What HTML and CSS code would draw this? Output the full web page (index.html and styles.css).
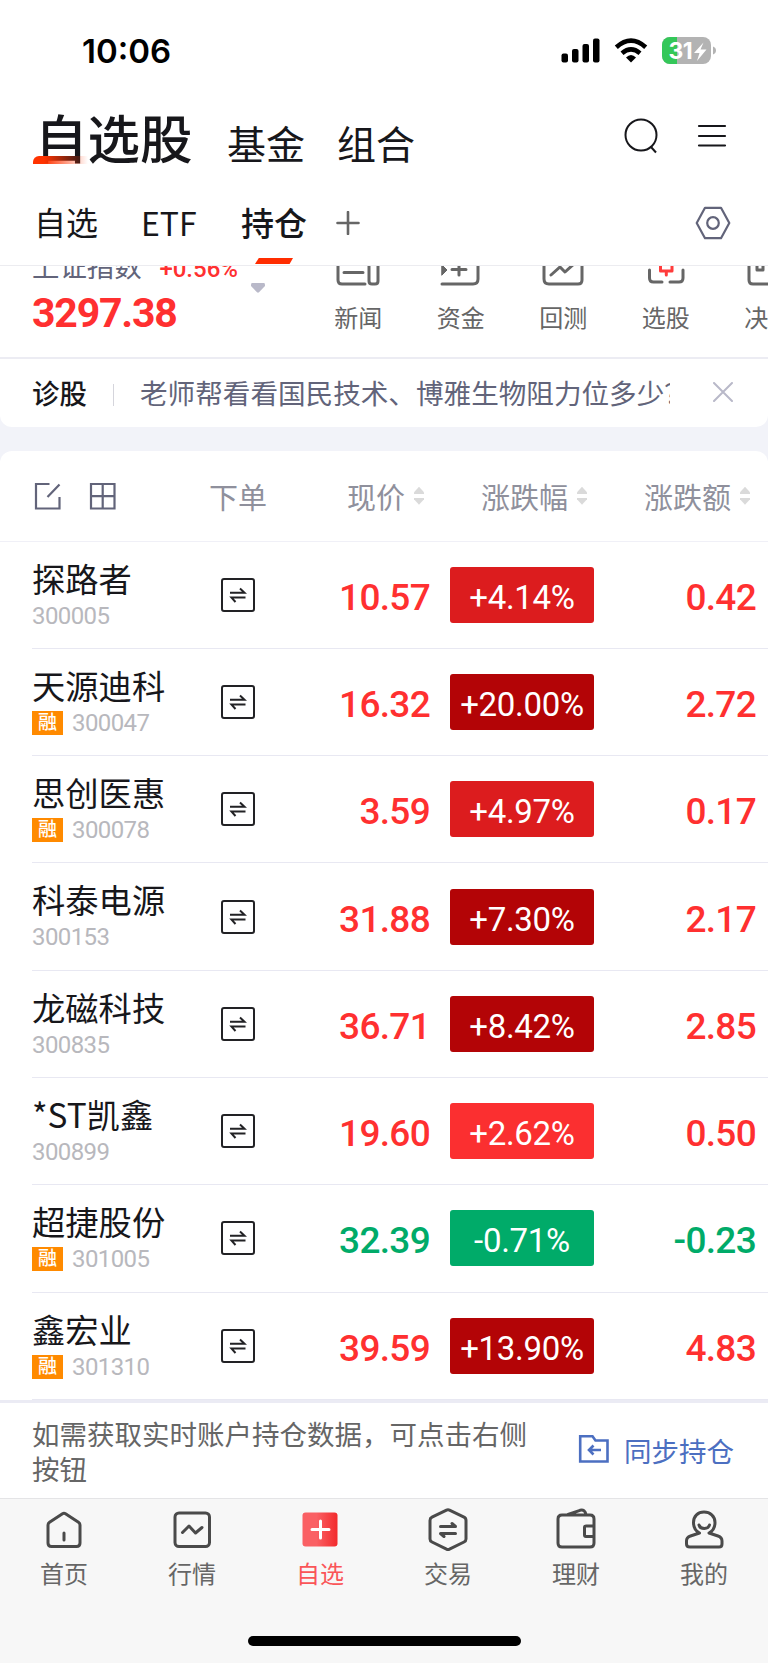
FILE: index.html
```html
<!DOCTYPE html>
<html lang="zh-CN">
<head>
  <meta charset="UTF-8" />
  <meta name="viewport" content="width=device-width, initial-scale=1.0" />
  <title>自选股</title>
  <link rel="stylesheet" href="styles.css">
</head>
<body>
  <div class="status">
    <span class="time">10:06</span>
    <svg class="status-icons" width="160" height="30" viewBox="0 0 160 30">
      <g fill="#000">
        <rect x="1.500" y="17.500" width="6.500" height="9" rx="2" />
        <rect x="12" y="13" width="6.500" height="13.500" rx="2" />
        <rect x="22.500" y="8" width="6.500" height="18.500" rx="2" />
        <rect x="33" y="2.500" width="6.500" height="24" rx="2" />
      </g>
      <g fill="none" stroke="#000" stroke-width="4.600">
        <path d="M56.300 11.300Q71 -1.900 85.700 11.300" />
        <path d="M62 17.200Q71 9.700 80 17.200" />
      </g>
      <path d="M66 21.500Q71 16.500 76 21.500L71 26.500Z" />
      <rect x="102" y="1" width="49" height="27" rx="8" fill="#b3b3b3" />
      <path d="M117 1H110a8 8 0 0 0-8 8V20a8 8 0 0 0 8 8H117Z" fill="#34c759" />
      <path d="M153 10.500q3 1.200 3 4t-3 4Z" fill="#b3b3b3" />
      <text x="108.500" y="22.800" class="battery-text">31</text>
      <path d="M143.500 6.500L134 17H139.500L137 25L146.500 13.500H140.500Z" fill="#fff" />
    </svg>
  </div>

  <header class="titles">
    <h1 class="title-active">自选股</h1>
    <span class="title">基金</span>
    <span class="title">组合</span>
    <svg class="search" width="36" height="38" viewBox="0 0 36 38" fill="none" stroke="#17171b" stroke-width="2">
      <circle cx="18" cy="18" r="15.500" />
      <path d="M28 30L33 35.500" />
    </svg>
    <svg class="menu" width="30" height="26" viewBox="0 0 30 26" stroke="#17171b" stroke-width="2.200" stroke-linecap="round">
      <path d="M2 3H28M2 13H28M2 22.500H28" />
    </svg>
  </header>

  <nav class="groups">
    <span class="group group-own">自选</span>
    <span class="group group-etf">ETF</span>
    <span class="group group-active">持仓</span>
    <svg class="add" width="24" height="24" viewBox="0 0 24 24" stroke="#666" stroke-width="2.600" stroke-linecap="round">
      <path d="M1.500 12H22.500M12 1V23" />
    </svg>
    <svg class="setting" width="36" height="34" viewBox="0 0 36 34" fill="none" stroke="#62647a" stroke-width="2.200" stroke-linejoin="round">
      <path d="M10 1.800H26L34.300 17L26 32.200H10L1.700 17Z" />
      <circle cx="18" cy="17" r="5.800" />
    </svg>
  </nav>

  <section class="strip">
    <div class="index">
      <div class="index-top"><span>上证指数</span><b class="index-change">+0.56%</b></div>
      <div class="index-value">3297.38</div>
    </div>
    <svg class="arrow" width="14" height="10" viewBox="0 0 14 10" fill="#b9b9c9">
      <path d="M1 0H13Q14 0 14 2V3L8 9.300Q7 10 6 9.300L0 3V2Q0 0 1 0Z" />
    </svg>
    <div class="shortcuts">
      <div class="shortcut">
        <svg width="44" height="40" viewBox="0 0 44 40">
          <path d="M29 2H5Q2 2 2 5V33Q2 37 6 37H29M8 16H27M8 25.500H27M33 15H39Q42 15 42 18V34Q42 37 39 37H36Q33 37 33 34Z" />
        </svg>
        <span>新闻</span>
      </div>
      <div class="shortcut">
        <svg width="44" height="40" viewBox="0 0 44 40">
          <path d="M3 37H34Q39 37 39 32V6Q39 2 35 2H3M13 22.500H27M20 14V28" />
          <path d="M3 18L8 23L3 28Z" class="solid" />
        </svg>
        <span>资金</span>
      </div>
      <div class="shortcut">
        <svg width="44" height="40" viewBox="0 0 44 40">
          <path d="M3 2H41V33Q41 37 37 37H8Q3 37 3 32ZM10 28L19 20L24 25L34 16" />
        </svg>
        <span>回测</span>
      </div>
      <div class="shortcut">
        <svg width="44" height="40" viewBox="0 0 44 40">
          <path d="M5.500 23V31Q5.500 35 9.500 35H18M39 23V31Q39 35 35 35H26" />
          <path d="M16.500 8H28V24H16.500ZM22.300 24V28" class="red" />
        </svg>
        <span>选股</span>
      </div>
      <div class="shortcut">
        <svg width="44" height="40" viewBox="0 0 44 40">
          <path d="M3 2H41V37H7Q3 37 3 33ZM11 8V23H17V8" />
        </svg>
        <span>决策</span>
      </div>
    </div>
  </section>

  <section class="advice">
    <b class="advice-tag">诊股</b>
    <span class="advice-line"></span>
    <span class="advice-text">老师帮看看国民技术、博雅生物阻力位多少？</span>
    <svg class="close" width="20" height="20" viewBox="0 0 20 20" stroke="#b9b9c9" stroke-width="2" stroke-linecap="round">
      <path d="M1 1L19 19M19 1L1 19" />
    </svg>
  </section>

  <main class="stocks">
    <div class="head">
      <div class="tools">
        <svg width="27" height="28" viewBox="0 0 27 28" fill="none" stroke="#62647a" stroke-width="2.200">
          <path d="M15.500 2H2V26.500H25.500V15M13.500 15L25.500 2.500" />
        </svg>
        <svg width="27" height="28" viewBox="0 0 27 28" fill="none" stroke="#62647a" stroke-width="2.200">
          <path d="M2 2H25.500V26.500H2ZM2 14.200H25.500M13.700 2V26.500" />
        </svg>
      </div>
      <span class="head-order">下单</span>
      <span class="head-sort">现价<i class="sort"></i></span>
      <span class="head-sort">涨跌幅<i class="sort"></i></span>
      <span class="head-sort">涨跌额<i class="sort"></i></span>
    </div>
    <div id="rows"></div>
  </main>

  <section class="sync">
    <p class="sync-text">如需获取实时账户持仓数据，可点击右侧按钮</p>
    <svg width="32" height="30" viewBox="0 0 32 30" fill="none" stroke="#4c6fc1" stroke-width="2.600">
      <path d="M2.200 2.200H14.500L17.500 6.500H29.500V27.500H2.200Z" />
      <path d="M23 16H11M15.500 11.500L11 16L15.500 20.500" />
    </svg>
    <span class="sync-link">同步持仓</span>
  </section>

  <footer class="tabbar">
    <div class="tab">
      <svg width="44" height="44" viewBox="0 0 44 44">
        <path d="M6 17Q6 15.300 7.500 14.300L20.500 5.700Q22 4.700 23.500 5.700L36.500 14.300Q38 15.300 38 17V35Q38 38.500 34.500 38.500H9.500Q6 38.500 6 35ZM22 25V32" />
      </svg>
      <span>首页</span>
    </div>
    <div class="tab">
      <svg width="44" height="44" viewBox="0 0 44 44">
        <rect x="5" y="5" width="34.500" height="33.500" rx="4" />
        <path d="M12.500 24.500L19 18L25.500 25L32 19.500" />
      </svg>
      <span>行情</span>
    </div>
    <div class="tab tab-active">
      <svg width="44" height="44" viewBox="0 0 44 44">
        <defs>
          <linearGradient id="own">
            <stop offset="0.400" stop-color="#fa6064" />
            <stop offset="1" stop-color="#f22a2c" />
          </linearGradient>
        </defs>
        <rect x="4.500" y="4.500" width="35" height="34" rx="3" fill="url(#own)" stroke="none" />
        <path d="M14 21.500H31M22.500 13V30" class="plus" />
      </svg>
      <span>自选</span>
    </div>
    <div class="tab">
      <svg width="44" height="44" viewBox="0 0 44 44">
        <path d="M20.500 2.200Q22 1.500 23.500 2.200L38 9.200Q40 10.200 40 12.500V31Q40 33 38 34L23.500 41.200Q22 42 20.500 41.200L6 34Q4 33 4 31V12.500Q4 10.200 6 9.200Z" />
        <path d="M14.500 18.500H29.500L26 15.500M29.500 25.500H14.500L18 28.500" />
      </svg>
      <span>交易</span>
    </div>
    <div class="tab">
      <svg width="44" height="44" viewBox="0 0 44 44">
        <path d="M40 18V11Q40 7 36 7H8Q4 7 4 11V35Q4 39 8 39H36Q40 39 40 35V18ZM40 18H32Q30.500 18 30.500 19.500V27Q30.500 28.500 32 28.500H40M14 6.500L26 2.300Q31 1 32 6.500" />
      </svg>
      <span>理财</span>
    </div>
    <div class="tab">
      <svg width="44" height="44" viewBox="0 0 44 44">
        <path d="M17.500 25Q11.500 22 11.500 14.500C11.500 8 16 4 22 4S33 8 33 14.500Q33 22 27 25L36 28Q40 29.300 40 33V36Q40 39 37 39H8Q4.500 39 4.500 36V33Q4.500 29.300 8.500 28ZM17 17Q18 20.500 22.300 20.500T27.500 17" />
      </svg>
      <span>我的</span>
    </div>
  </footer>
  <div class="home-bar"></div>

  <script>
    const stocks = [
      { name: '探路者', code: '300005', price: '10.57', rate: '+4.14%', diff: '0.42', level: 'mid' },
      { name: '天源迪科', code: '300047', price: '16.32', rate: '+20.00%', diff: '2.72', level: 'high', margin: true },
      { name: '思创医惠', code: '300078', price: '3.59', rate: '+4.97%', diff: '0.17', level: 'mid', margin: true },
      { name: '科泰电源', code: '300153', price: '31.88', rate: '+7.30%', diff: '2.17', level: 'high' },
      { name: '龙磁科技', code: '300835', price: '36.71', rate: '+8.42%', diff: '2.85', level: 'high' },
      { name: '*ST凯鑫', code: '300899', price: '19.60', rate: '+2.62%', diff: '0.50', level: 'low' },
      { name: '超捷股份', code: '301005', price: '32.39', rate: '-0.71%', diff: '-0.23', level: 'down', margin: true },
      { name: '鑫宏业', code: '301310', price: '39.59', rate: '+13.90%', diff: '4.83', level: 'high', margin: true }
    ];

    document.querySelector('#rows').innerHTML = stocks.map(s => `
      <div class="row ${s.level}">
        <div class="stock">
          <div class="name">${s.name}</div>
          <div class="code">${s.margin ? '<span class="margin">融</span>' : ''}${s.code}</div>
        </div>
        <svg class="order" width="34" height="34" viewBox="0 0 34 34" fill="none" stroke="#222225" stroke-width="2">
          <rect x="1" y="1" width="32" height="32" rx="2" />
          <path d="M9 14.800H23.500L19 10.500M24.500 19.600H10.500L14.500 24" />
        </svg>
        <span class="num">${s.price}</span>
        <span class="rate">${s.rate}</span>
        <span class="num">${s.diff}</span>
      </div>
    `).join('');
  </script>
</body>
</html>
```

FILE: styles.css
```css
* { box-sizing: border-box; }
body { margin: 0; width: 768px; height: 1663px; overflow: hidden; background: #f2f3f9; color: #17171b; font-family: Roboto, "Noto Sans CJK SC", sans-serif; }
svg { display: block; flex: none; }
.status, .titles, .groups, .strip, .advice, .stocks, .sync { background: #fff; }

/* status bar */
.status { height: 102px; padding: 35px 48px 0 82px; display: flex; justify-content: space-between; }
.time { font: 600 33px/32px Inter, sans-serif; color: #000; }
.status-icons { margin-top: 1px; }
.battery-text { font: 700 23px Inter, sans-serif; fill: #fff; letter-spacing: -0.5px; }

/* page titles */
.titles { height: 68px; padding: 0 41px 0 35px; display: flex; align-items: baseline; white-space: nowrap; }
.title-active { position: relative; margin: 0 33px 0 0; width: 159px; font-size: 52.5px; font-weight: 500; line-height: 78px; }
.title-active::after { content: ""; position: absolute; left: -2px; top: 54px; width: 55px; height: 8px; border-radius: 6px 0 0 0; background: linear-gradient(90deg, #ff3300 20%, rgba(255, 51, 0, 0)); }
.title { margin-right: 32px; font-size: 39px; }
.search { align-self: center; margin-left: auto; }
.menu { align-self: center; margin-left: 38px; }

/* group tabs */
.groups { height: 96px; padding: 11px 37px 0 34px; display: flex; align-items: center; border-bottom: 1px solid #ececf0; }
.group { font-size: 32px; line-height: 40px; white-space: nowrap; }
.group-own { width: 107px; padding-top: 2px; }
.group-etf { width: 100px; margin-top: -3px; font-family: "Noto Sans CJK SC", sans-serif; }
.group-active { position: relative; width: 95px; padding-top: 4px; font-weight: 500; font-size: 33px; }
.group-active::after { content: ""; position: absolute; left: 14px; top: 57px; width: 38px; height: 6px; background: #ff2d00; clip-path: polygon(10% 0, 100% 0, 91% 100%, 0 100%); }
.setting { margin-left: auto; }

/* index and shortcuts, scrolled under the tabs */
.strip { height: 93px; overflow: hidden; display: flex; border-bottom: 2px solid #ececf3; }
.index { width: 219px; padding-left: 32px; margin-top: -15px; white-space: nowrap; }
.index-top { display: flex; justify-content: space-between; width: 206px; height: 34px; line-height: 34px; font-size: 27.4px; color: #62647a; }
.index-change { font-size: 24px; font-weight: 500; line-height: 37px; color: #ff3030; }
.index-value { margin-top: 6px; font-size: 41px; font-weight: 700; line-height: 44px; letter-spacing: -1.2px; color: #ff3030; }
.arrow { margin: 17px 0 0 32px; }
.shortcuts { display: flex; margin: -19px 0 0 42px; }
.shortcut { flex: none; width: 102.5px; display: flex; flex-direction: column; align-items: center; font-size: 24px; line-height: 32px; color: #666; }
.shortcut span { margin-top: 16px; }
.shortcut path { fill: none; stroke: #666; stroke-width: 3; stroke-linecap: round; stroke-linejoin: round; }
.shortcut .solid { fill: #666; stroke-width: 1; }
.shortcut .red { stroke: #ff3b3b; }

.advice { height: 68px; padding: 0 35px 2px 32px; display: flex; align-items: center; border-radius: 0 0 12px 12px; font-size: 27.4px; }
.advice-tag { font-weight: 500; width: 81px; }
.advice-line { width: 1px; height: 22px; background: #d5d5dc; margin-top: 6px; }
.advice-text { width: 530px; margin-left: 26px; overflow: hidden; white-space: nowrap; font-size: 27.6px; color: #62647a; }
.close { margin-left: auto; }

/* stock list */
.stocks { margin-top: 24px; border-radius: 12px 12px 0 0; }
.head { display: grid; grid-template-columns: 155px 102px 135px 163px 163px; align-items: center; height: 90.5px; padding-left: 32px; border-bottom: 1px solid #f0f0f7; font-size: 29px; color: #8f909c; }
.tools { display: flex; gap: 28px; padding-left: 2px; }
.head-order { text-align: center; }
.head-sort { display: flex; justify-content: flex-end; align-items: center; }
.sort { width: 10px; height: 18px; margin-left: 9px; background: linear-gradient(#dadada 0 7px, #fff 7px 11px, #dadada 11px); clip-path: polygon(50% 0, 100% 30%, 100% 70%, 50% 100%, 0 70%, 0 30%); }
.row { display: grid; grid-template-columns: 155px 102px 141px 144px 182px; align-items: center; height: 107.3px; margin-left: 32px; border-bottom: 1.5px solid #e8e8f2; }
.stock { align-self: start; padding-top: 16px; }
.name { font-size: 33.3px; line-height: 40px; font-family: "Noto Sans CJK SC", sans-serif; white-space: nowrap; }
.code { display: flex; gap: 9px; margin-top: 6px; font-size: 24px; line-height: 25px; letter-spacing: -0.6px; color: #b8b8bd; }
.margin { width: 31px; height: 24px; background: #ff8a00; color: #fff; font-size: 19px; font-weight: 500; line-height: 23px; text-align: center; letter-spacing: 0; }
.order { justify-self: center; }
.num { text-align: right; font-size: 37px; font-weight: 500; font-stretch: 88%; letter-spacing: -0.7px; padding-top: 5px; color: #ff3030; }
.rate { position: relative; left: 20px; height: 56px; border-radius: 3px; text-align: center; font-size: 33px; font-stretch: 88%; line-height: 61px; letter-spacing: -0.3px; color: #fff; }
.low .rate { background: #fb2f30; }
.mid .rate { background: #dc1c1e; }
.high .rate { background: #b30406; }
.down .rate { background: #00ab69; }
.down .num { color: #00ab69; }

/* sync notice */
.sync { display: flex; height: 98.1px; padding: 15px 0 0 32px; border-top: 3px solid #ebebf4; font-size: 27.5px; }
.sync-text { width: 505px; margin: 0 41px 0 0; line-height: 35px; color: #666; }
.sync svg { margin-top: 16px; }
.sync-link { margin: 17px 0 0 14px; line-height: 36px; color: #4c6fc1; white-space: nowrap; }

/* bottom tabs */
.tabbar { display: flex; height: 165px; padding-top: 9px; background: #f7f7f7; border-top: 1px solid #e4e4e6; }
.tab { width: 128px; display: flex; flex-direction: column; align-items: center; font-size: 24px; line-height: 32px; color: #666; }
.tab span { margin-top: 7px; }
.tab path, .tab rect { stroke: #4a4a4a; stroke-width: 3; stroke-linecap: round; stroke-linejoin: round; fill: none; }
.tab-active { color: #fa5558; }
.tab-active rect { fill: url(#own); stroke: none; }
.tab .plus { stroke: #fff; }
.home-bar { position: absolute; left: 248px; top: 1636px; width: 273px; height: 10px; border-radius: 5px; background: #000; }
```
